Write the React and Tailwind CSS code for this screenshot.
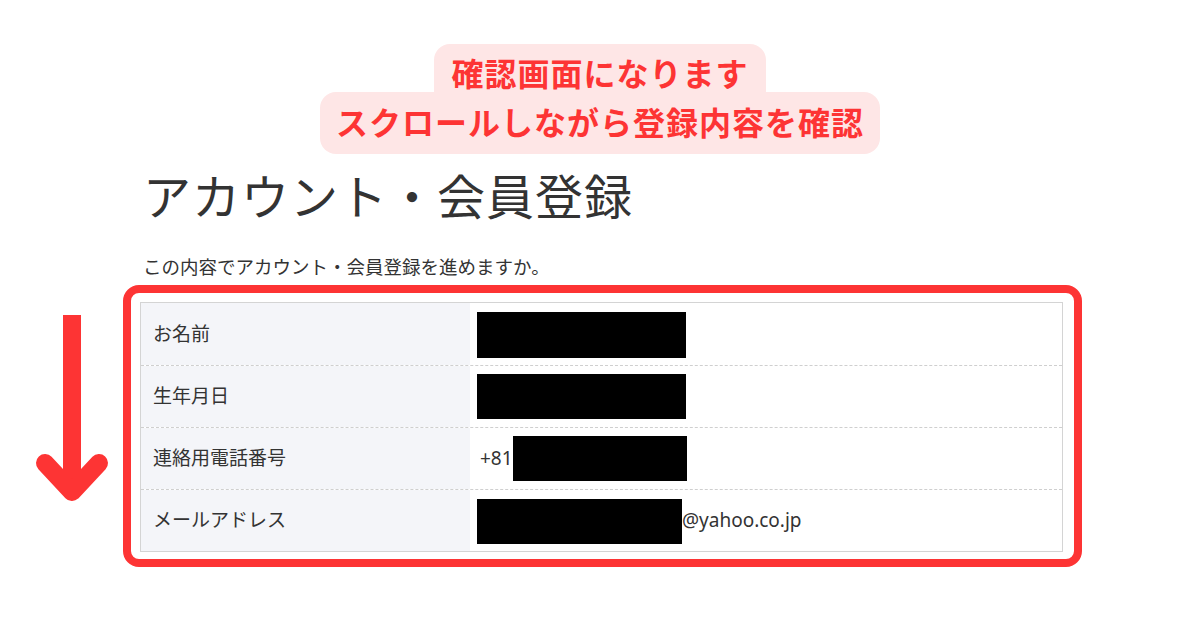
import React from 'react';

const rows = [
  { label: 'お名前', value: <div className="w-[209px] h-[46px] bg-black mt-[1px]" /> },
  { label: '生年月日', value: <div className="w-[209px] h-[45px] bg-black" /> },
  {
    label: '連絡用電話番号',
    value: (
      <div className="flex items-center">
        <span className="pl-[3px]">+81</span>
        <div className="w-[174px] h-[45px] bg-black" />
      </div>
    ),
  },
  {
    label: 'メールアドレス',
    value: (
      <div className="flex items-center">
        <div className="w-[205px] h-[45px] bg-black mt-[2px]" />
        <span>@yahoo.co.jp</span>
      </div>
    ),
  },
];

function DownArrow() {
  return (
    <svg width="123" height="282" viewBox="0 0 123 282">
      <line x1="72" y1="30" x2="72" y2="205" stroke="#fd3434" strokeWidth="18" />
      <polyline
        points="45,178 72,207 99,178"
        fill="none"
        stroke="#fd3434"
        strokeWidth="18"
        strokeLinecap="round"
        strokeLinejoin="round"
      />
    </svg>
  );
}

export default function App() {
  return (
    <div
      className="w-[1200px] h-[630px] bg-white text-[#333] overflow-hidden"
      style={{ fontFamily: '"Noto Sans", "Noto Sans CJK JP", sans-serif' }}
    >
      {/* callout */}
      <div className="flex flex-col items-center pt-[44px] font-bold text-[#fd3434] text-[32px] tracking-[1px] leading-[40px]">
        <div className="w-[332px] h-[48px] bg-[#fee6e6] rounded-t-[16px] pt-[10px] text-center">
          確認画面になります
        </div>
        <div className="w-[560px] h-[62px] bg-[#fee6e6] rounded-[16px] pt-[11px] text-center">
          スクロールしながら登録内容を確認
        </div>
      </div>

      <h1 className="pl-[143px] mt-[14px] text-[48px] leading-[58px] tracking-[1px] font-normal">
        アカウント・会員登録
      </h1>
      <p className="pl-[143px] mt-[29px] text-[18.5px] leading-[24px]">
        この内容でアカウント・会員登録を進めますか。
      </p>

      <div className="flex mt-[6px]">
        <DownArrow />
        <div className="w-[959px] h-[282px] border-[8px] border-[#fd3434] rounded-[16px] pt-[9px] pl-[9px] pr-[11px] pb-[6px]">
          <div className="border border-[#d4d4d4] text-[19px]">
            {rows.map((r, i) => (
              <div
                key={i}
                className={
                  'flex h-[62px] ' + (i > 0 ? 'border-t border-dashed border-[#cfcfcf]' : '')
                }
              >
                <div className="w-[329px] bg-[#f4f5f9] flex items-center pl-[12px]">{r.label}</div>
                <div className="flex-1 flex items-center pl-[7px]">{r.value}</div>
              </div>
            ))}
          </div>
        </div>
      </div>
    </div>
  );
}
